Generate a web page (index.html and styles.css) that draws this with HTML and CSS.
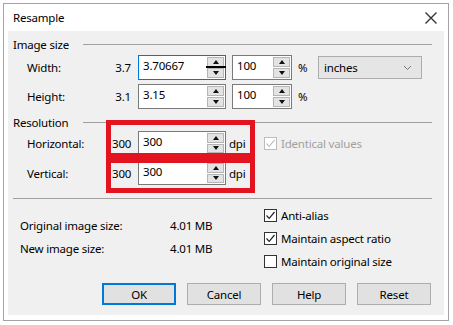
FILE: index.html
```html
<!DOCTYPE html>
<html>
<head>
<meta charset="utf-8">
<link rel="stylesheet" href="styles.css">
</head>
<body>
<div class="window">
  <div class="titlebar">
    <span class="title">Resample</span>
    <svg class="close" width="14" height="14" viewBox="0 0 14 14"><path d="M1.5 1.5 L12.5 12.5 M12.5 1.5 L1.5 12.5" stroke="#333" stroke-width="1.4" fill="none"/></svg>
  </div>
  <div class="panel">
    <div class="group-head first"><span class="gtitle">Image size</span><i class="rule"></i></div>
    <div class="row r25">
      <span class="lbl">Width:</span><span class="orig">3.7</span>
      <div class="spin w88 focused"><span class="val">3.70667</span><span class="btns"><b class="up"></b><b class="dn"></b></span><i class="cursor-line"></i></div>
      <div class="spin w60 gap6"><span class="val">100</span><span class="btns"><b class="up"></b><b class="dn"></b></span></div>
      <span class="unit">%</span>
      <div class="select"><span>inches</span><svg width="9" height="6" viewBox="0 0 9 6"><path d="M1 1 L4.5 4.5 L8 1" stroke="#777" stroke-width="1" fill="none"/></svg></div>
    </div>
    <div class="row r25 mt4">
      <span class="lbl">Height:</span><span class="orig">3.1</span>
      <div class="spin w88"><span class="val">3.15</span><span class="btns"><b class="up"></b><b class="dn"></b></span></div>
      <div class="spin w60 gap6"><span class="val">100</span><span class="btns"><b class="up"></b><b class="dn"></b></span></div>
      <span class="unit">%</span>
    </div>
    <div class="group-head second"><span class="gtitle">Resolution</span><i class="rule"></i></div>
    <div class="row r24">
      <span class="lbl">Horizontal:</span><span class="orig">300</span>
      <div class="spin w88"><span class="val">300</span><span class="btns"><b class="up"></b><b class="dn"></b></span></div>
      <span class="dpi">dpi</span>
      <label class="check disabled"><span class="box"><svg width="11" height="11" viewBox="0 0 11 11"><path d="M1.5 5.5 L4.2 8.3 L9.5 2" stroke="#c2c2c2" stroke-width="1.2" fill="none"/></svg></span>Identical values</label>
    </div>
    <div class="row r24 mt6">
      <span class="lbl">Vertical:</span><span class="orig">300</span>
      <div class="spin w88"><span class="val">300</span><span class="btns"><b class="up"></b><b class="dn"></b></span></div>
      <span class="dpi">dpi</span>
    </div>
    <div class="sep"></div>
    <div class="bottom">
      <div class="info">
        <div class="irow"><span class="ilbl">Original image size:</span><span>4.01 MB</span></div>
        <div class="irow"><span class="ilbl">New image size:</span><span>4.01 MB</span></div>
      </div>
      <div class="checks">
        <label class="check crow"><span class="box"><svg width="11" height="11" viewBox="0 0 11 11"><path d="M1.5 5.5 L4.2 8.3 L9.5 2" stroke="#222" stroke-width="1.2" fill="none"/></svg></span>Anti-alias</label>
        <label class="check crow"><span class="box"><svg width="11" height="11" viewBox="0 0 11 11"><path d="M1.5 5.5 L4.2 8.3 L9.5 2" stroke="#222" stroke-width="1.2" fill="none"/></svg></span>Maintain aspect ratio</label>
        <label class="check crow"><span class="box"></span>Maintain original size</label>
      </div>
    </div>
    <div class="buttons">
      <button class="btn default">OK</button>
      <button class="btn">Cancel</button>
      <button class="btn">Help</button>
      <button class="btn">Reset</button>
    </div>
    <div class="mark mark1"></div>
    <div class="mark mark2"></div>
  </div>
</div>
</body>
</html>
```
FILE: styles.css
```css
* { box-sizing: border-box; }
html, body { margin: 0; padding: 0; background: #fff; }
body {
  font-family: "Noto Sans", "Open Sans", sans-serif;
  font-size: 11.5px;
  letter-spacing: -0.2px;
  color: #000;
}
.window {
  margin: 3px;
  width: 446px;
  height: 318px;
  border: 1px solid #a3a3a3;
  background: #fff;
}
.titlebar {
  height: 27px;
  display: flex;
  align-items: center;
  justify-content: space-between;
  padding: 0 10px 0 9px;
}
.title { font-size: 11.5px; }
.close { display: block; }
.panel {
  position: relative;
  margin-left: 4px;
  width: 436px;
  height: 284px;
  background: #f0f0f0;
  padding: 0 12px 0 5px;
}
.group-head {
  display: flex;
  align-items: center;
}
.group-head.first { height: 24px; padding-top: 2px; }
.group-head.second { height: 22px; padding-top: 4px; }
.gtitle { width: 70px; }
.rule { flex: 1; height: 1px; background: #a0a0a0; }
.row {
  display: flex;
  align-items: center;
  padding-left: 14px;
}
.r25 { height: 25px; }
.r24 { height: 24px; }
.mt4 { margin-top: 4px; }
.mt6 { margin-top: 6px; }
.lbl { width: 85px; }
.orig { width: 19px; text-align: right; }
.spin {
  position: relative;
  height: 100%;
  margin-left: 7px;
  display: flex;
  align-items: stretch;
  background: #fff;
  border: 1px solid #7a7a7a;
}
.spin.focused { border-color: #0078d7; }
.w88 { width: 88px; }
.w60 { width: 60px; }
.spin.gap6 { margin-left: 6px; }
.val { flex: 1; padding: 1px 0 0 4px; line-height: 18px; }
.btns {
  width: 18px;
  display: flex;
  flex-direction: column;
  gap: 1px;
  padding: 1px 1px 1px 0;
}
.btns b {
  flex: 1;
  background: #e3e3e3;
  border: 1px solid #b5b5b5;
  display: flex;
  align-items: center;
  justify-content: center;
}
.btns b::after {
  content: "";
  width: 0; height: 0;
  border-left: 3px solid transparent;
  border-right: 3px solid transparent;
}
.btns .up::after { border-bottom: 4px solid #111; }
.btns .dn::after { border-top: 4px solid #111; }
.cursor-line {
  position: absolute;
  left: 67px;
  top: 10px;
  width: 20px;
  height: 2px;
  background: #000;
}
.unit { margin-left: 6px; width: 20px; }
.select {
  width: 104px;
  height: 23px;
  background: #e5e5e5;
  border: 1px solid #adadad;
  display: flex;
  align-items: center;
  justify-content: space-between;
  padding: 0 9px 0 5px;
}
.select svg { display: block; }
.dpi { margin-left: 3px; width: 35px; }
.check {
  display: flex;
  align-items: center;
}
.box {
  width: 13px;
  height: 13px;
  border: 1px solid #333;
  background: #fff;
  margin-right: 4px;
  display: flex;
  align-items: center;
  justify-content: center;
}
.box svg { display: block; }
.check.disabled { color: #a0a0a0; }
.check.disabled .box { border-color: #bcbcbc; }
.sep {
  margin-top: 13px;
  height: 1px;
  background: #a0a0a0;
}
.bottom { display: flex; }
.info { width: 251px; padding: 15px 0 0 7px; }
.irow { height: 23px; display: flex; align-items: center; }
.ilbl { width: 150px; }
.checks { padding-top: 5px; }
.crow { height: 23px; }
.buttons {
  margin-top: 10px;
  display: flex;
  justify-content: flex-end;
  gap: 11px;
  padding-right: 1px;
}
.btn {
  width: 74px;
  height: 22px;
  background: #e1e1e1;
  border: 1px solid #adadad;
  font-family: inherit;
  font-size: 11.5px;
  letter-spacing: -0.2px;
  color: #000;
  padding: 0;
}
.btn.default { border: 2px solid #0078d7; }
.mark {
  position: absolute;
  left: 98px;
  width: 149px;
  border: 5px solid #e3141f;
}
.mark1 { top: 89px; height: 38px; }
.mark2 { top: 127px; height: 35px; }
```
